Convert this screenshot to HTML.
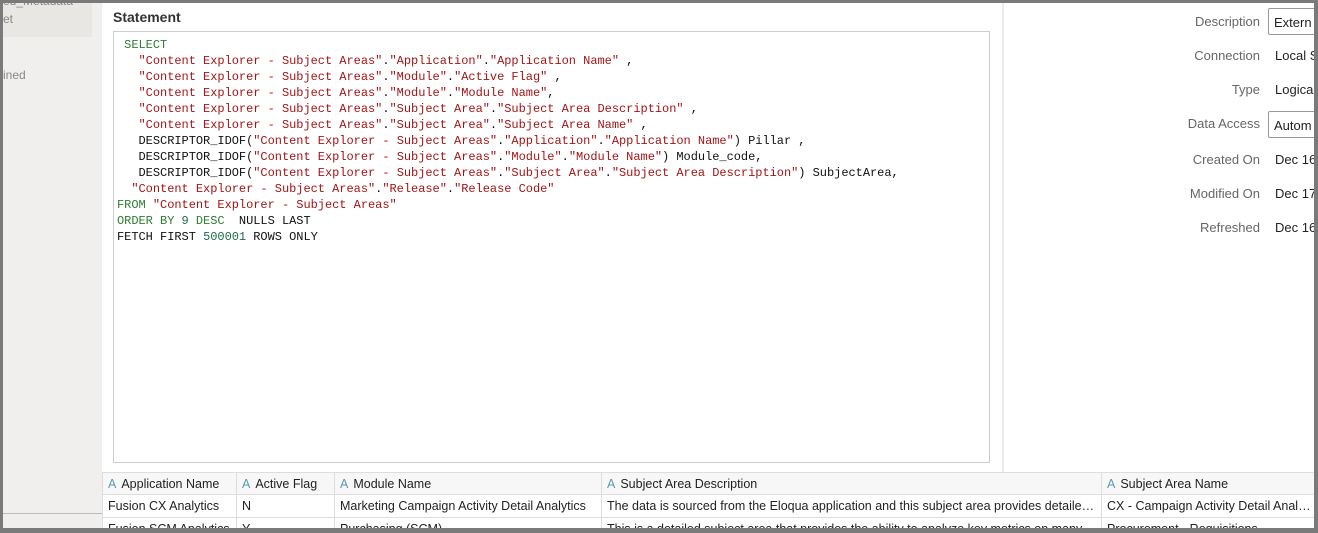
<!DOCTYPE html>
<html><head><meta charset="utf-8"><style>
*{margin:0;padding:0;box-sizing:border-box}
body{width:1318px;height:533px;background:#7a7a7a;position:relative;overflow:hidden;font-family:"Liberation Sans",sans-serif}
#app{position:absolute;left:3px;top:3px;width:1311px;height:525px;background:#fff;overflow:hidden}
#side{position:absolute;left:0;top:0;width:99px;height:525px;background:#f1efed}
#sidebox{position:absolute;left:0;top:0;width:89px;height:34px;background:#e9e7e4}
.st{position:absolute;color:#888;font-size:12px}
#main{position:absolute;left:99px;top:0;width:900px;height:470px;background:#fff}
h2{position:absolute;left:11px;top:6px;font-size:14px;font-weight:bold;color:#333}
#code{position:absolute;left:11px;top:28px;width:877px;height:432px;border:1px solid #ccc;padding:5px 0 0 3px}
pre{font-family:"Liberation Mono",monospace;font-size:12px;line-height:16px;color:#111;letter-spacing:-0.03px}
.k{color:#2e7d32}.s{color:#a31515}.n{color:#1b6b47}
#div{position:absolute;left:999px;top:0;width:2px;height:470px;background:#ececec}
#right{position:absolute;left:1001px;top:0;width:310px;height:470px;background:#fff}
.lb{position:absolute;right:54px;width:120px;text-align:right;font-size:13px;color:#666}
.vl{position:absolute;left:271px;font-size:13px;color:#222;white-space:nowrap}
.bx{position:absolute;left:264px;width:60px;height:27px;border:1px solid #999;border-radius:2px;padding:6px 0 0 5px;font-size:13px;color:#222;overflow:hidden;white-space:nowrap}
table{position:absolute;left:99px;top:469px;width:1219px;border-collapse:collapse;font-size:12.5px;color:#222;table-layout:fixed}
td,th{border:1px solid #ddd;height:23px;padding:0 5px;white-space:nowrap;overflow:hidden;text-overflow:ellipsis;font-weight:normal;text-align:left}
th{background:#f7f7f7;height:22px}
th i{font-style:normal;color:#5a9ab5;margin-right:5px}
</style></head><body><div id="app">
<div id="side"><div id="sidebox"></div>
<div class="st" style="left:0;top:-9px">ed_Metadata</div>
<div class="st" style="left:0;top:9px">et</div>
<div class="st" style="left:0;top:65px">ined</div>
<div style="position:absolute;left:0;top:510px;width:99px;height:1px;background:#bbb"></div>
</div>
<div id="main"><h2>Statement</h2>
<div id="code"><pre> <span class="k">SELECT</span>
   <span class="s">"Content Explorer - Subject Areas"</span>.<span class="s">"Application"</span>.<span class="s">"Application Name"</span> ,
   <span class="s">"Content Explorer - Subject Areas"</span>.<span class="s">"Module"</span>.<span class="s">"Active Flag"</span> ,
   <span class="s">"Content Explorer - Subject Areas"</span>.<span class="s">"Module"</span>.<span class="s">"Module Name"</span>,
   <span class="s">"Content Explorer - Subject Areas"</span>.<span class="s">"Subject Area"</span>.<span class="s">"Subject Area Description"</span> ,
   <span class="s">"Content Explorer - Subject Areas"</span>.<span class="s">"Subject Area"</span>.<span class="s">"Subject Area Name"</span> ,
   DESCRIPTOR_IDOF(<span class="s">"Content Explorer - Subject Areas"</span>.<span class="s">"Application"</span>.<span class="s">"Application Name"</span>) Pillar ,
   DESCRIPTOR_IDOF(<span class="s">"Content Explorer - Subject Areas"</span>.<span class="s">"Module"</span>.<span class="s">"Module Name"</span>) Module_code,
   DESCRIPTOR_IDOF(<span class="s">"Content Explorer - Subject Areas"</span>.<span class="s">"Subject Area"</span>.<span class="s">"Subject Area Description"</span>) SubjectArea,
  <span class="s">"Content Explorer - Subject Areas"</span>.<span class="s">"Release"</span>.<span class="s">"Release Code"</span>
<span class="k">FROM</span> <span class="s">"Content Explorer - Subject Areas"</span>
<span class="k">ORDER BY</span> <span class="n">9</span> <span class="k">DESC</span>  NULLS LAST
FETCH FIRST <span class="n">500001</span> ROWS ONLY</pre></div></div>
<div id="div"></div>
<div id="right">
<div class="lb" style="top:11px">Description</div><div class="bx" style="top:5px">Extern</div>
<div class="lb" style="top:45px">Connection</div><div class="vl" style="top:45px">Local S</div>
<div class="lb" style="top:79px">Type</div><div class="vl" style="top:79px">Logica</div>
<div class="lb" style="top:113px">Data Access</div><div class="bx" style="top:108px">Autom</div>
<div class="lb" style="top:149px">Created On</div><div class="vl" style="top:149px">Dec 16</div>
<div class="lb" style="top:183px">Modified On</div><div class="vl" style="top:183px">Dec 17</div>
<div class="lb" style="top:217px">Refreshed</div><div class="vl" style="top:217px">Dec 16</div>
</div>
<table>
<colgroup><col style="width:134px"><col style="width:98px"><col style="width:267px"><col style="width:500px"><col style="width:220px"></colgroup>
<tr><th><i>A</i>Application Name</th><th><i>A</i>Active Flag</th><th><i>A</i>Module Name</th><th><i>A</i>Subject Area Description</th><th><i>A</i>Subject Area Name</th></tr>
<tr><td>Fusion CX Analytics</td><td>N</td><td>Marketing Campaign Activity Detail Analytics</td><td>The data is sourced from the Eloqua application and this subject area provides detailed analytics</td><td>CX - Campaign Activity Detail Analysis</td></tr>
<tr><td>Fusion SCM Analytics</td><td>Y</td><td>Purchasing (SCM)</td><td>This is a detailed subject area that provides the ability to analyze key metrics on many</td><td>Procurement - Requisitions</td></tr>
</table>
</div></body></html>
